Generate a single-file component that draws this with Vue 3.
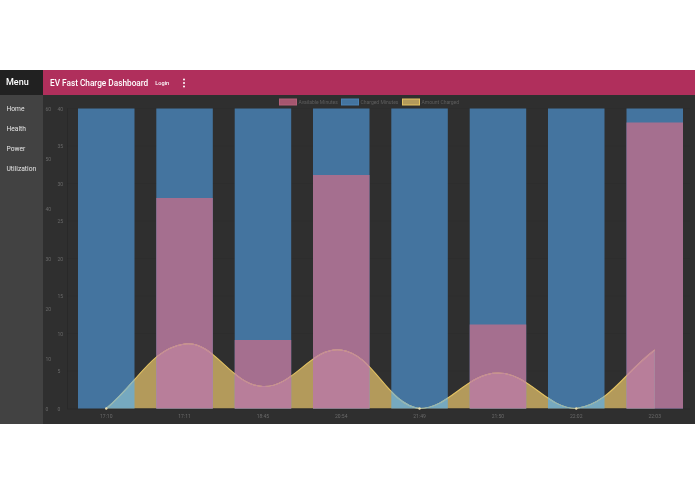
<template>
  <div class="page">
    <div class="dashboard">
      <aside class="sidebar">
        <div class="menu-title">Menu</div>
        <nav class="menu-list">
          <a v-for="item in menuItems" :key="item" class="menu-item">{{ item }}</a>
        </nav>
      </aside>
      <main class="main">
        <header class="toolbar">
          <span class="title">EV Fast Charge Dashboard</span>
          <span class="login">Login</span>
          <svg class="dots" width="4" height="10" viewBox="0 0 4 10">
            <circle cx="2" cy="1.4" r="1" />
            <circle cx="2" cy="5" r="1" />
            <circle cx="2" cy="8.6" r="1" />
          </svg>
        </header>
        <svg class="chart" width="652" height="329" viewBox="43 95 652 329">
          <defs>
            <clipPath id="area-clip"><path :d="areaPath" /></clipPath>
            <clipPath id="pink-clip">
              <rect v-for="bar in bars" :key="bar.label" :x="bar.x" :y="bar.y" :width="barWidth" :height="bottom - bar.y" />
            </clipPath>
            <clipPath id="blue-clip">
              <rect v-for="bar in emptyBars" :key="bar.label" :x="bar.x" :y="top" :width="barWidth" :height="bottom - top" />
            </clipPath>
          </defs>

          <!-- legend -->
          <g v-for="item in legend" :key="item.label">
            <rect :x="item.x" y="99" width="17" height="6" :fill="item.fill" :stroke="item.stroke" stroke-width="1" />
            <text :x="item.x + 19" y="104" class="legend-text">{{ item.label }}</text>
          </g>

          <!-- grid -->
          <line v-for="t in gridY" :key="t" x1="67" x2="690" :y1="t" :y2="t" class="grid" />
          <line x1="67.5" x2="67.5" :y1="top" :y2="bottom" class="axis" />
          <line x1="67" x2="690" :y1="bottom + 0.5" :y2="bottom + 0.5" class="axis" />

          <!-- axes -->
          <text v-for="t in leftTicks" :key="'l' + t.label" x="45.5" :y="t.y + 2" class="tick">{{ t.label }}</text>
          <text v-for="t in rightTicks" :key="'r' + t.label" x="57.5" :y="t.y + 2" class="tick">{{ t.label }}</text>
          <text v-for="bar in bars" :key="'x' + bar.label" :x="bar.cx" y="418" text-anchor="middle" class="tick">{{ bar.label }}</text>

          <!-- bars -->
          <g v-for="bar in bars" :key="'b' + bar.label">
            <rect :x="bar.x" :y="top" :width="barWidth" :height="bottom - top" fill="#44749f" />
            <rect :x="bar.x" :y="bar.y" :width="barWidth" :height="bottom - bar.y" fill="#a56f8f" />
          </g>

          <!-- amount charged area: tinted by whatever is under it -->
          <g clip-path="url(#area-clip)">
            <rect x="67" :y="top" width="628" :height="bottom - top" fill="#b39a5b" />
            <g v-for="bar in bars" :key="'a' + bar.label">
              <rect :x="bar.x" :y="top" :width="barWidth" :height="bottom - top" fill="#76a9bf" />
              <rect :x="bar.x" :y="bar.y" :width="barWidth" :height="bottom - bar.y" fill="#b87e9a" />
            </g>
          </g>

          <path :d="linePath" fill="none" stroke="#e3c262" stroke-width="1.1" />
          <g clip-path="url(#pink-clip)">
            <path :d="linePath" fill="none" stroke="#c285a2" stroke-width="1.1" />
          </g>
          <g clip-path="url(#blue-clip)">
            <path :d="linePath" fill="none" stroke="#86b6c6" stroke-width="1.1" />
          </g>
          <circle cx="106.25" cy="408.5" r="1.2" fill="#eadcae" />
          <circle cx="419.55" cy="408.5" r="1.2" fill="#eadcae" />
          <circle cx="576.25" cy="408.5" r="1.2" fill="#eadcae" />
        </svg>
      </main>
    </div>
  </div>
</template>

<script setup>
import { computed } from 'vue'

const menuItems = ['Home', 'Health', 'Power', 'Utilization']

const top = 108.5
const bottom = 408.5
const barWidth = 56.5

const bars = [
  { label: '17:10', x: 78, y: bottom },
  { label: '17:11', x: 156.3, y: 198 },
  { label: '18:45', x: 234.7, y: 340 },
  { label: '20:54', x: 313, y: 175 },
  { label: '21:49', x: 391.3, y: bottom },
  { label: '21:50', x: 469.7, y: 324.5 },
  { label: '22:02', x: 548, y: bottom },
  { label: '22:03', x: 626.5, y: 122.5 }
].map(b => ({ ...b, cx: b.x + barWidth / 2 }))

const emptyBars = bars.filter(b => b.y === bottom)

const amounts = [408.5, 344, 386.5, 350, 408.5, 373, 408.5, 350]

const legend = [
  { label: 'Available Minutes', x: 279.5, fill: '#a5566f', stroke: '#b5607a' },
  { label: 'Charged Minutes', x: 341.5, fill: '#44749f', stroke: '#4a82b4' },
  { label: 'Amount Charged', x: 402.5, fill: '#b39a5b', stroke: '#e3c262' }
]

const leftTicks = [60, 50, 40, 30, 20, 10, 0].map((v, i) => ({ label: v, y: top + i * 50 }))
const rightTicks = [40, 35, 30, 25, 20, 15, 10, 5, 0].map((v, i) => ({ label: v, y: top + i * 37.5 }))
const gridY = rightTicks.slice(0, -1).map(t => t.y)

// same spline Chart.js uses for tension .4
const points = computed(() => bars.map((b, i) => ({ x: b.cx, y: amounts[i] })))

const linePath = computed(() => {
  const pts = points.value
  let d = `M${pts[0].x} ${pts[0].y}`
  const ctrl = pts.map((p, i) => {
    const prev = pts[i - 1] || p
    const next = pts[i + 1] || p
    const d01 = Math.hypot(p.x - prev.x, p.y - prev.y)
    const d12 = Math.hypot(next.x - p.x, next.y - p.y)
    const sum = d01 + d12 || 1
    const fa = 0.4 * d01 / sum
    const fb = 0.4 * d12 / sum
    return {
      inX: p.x - fa * (next.x - prev.x),
      inY: p.y - fa * (next.y - prev.y),
      outX: p.x + fb * (next.x - prev.x),
      outY: p.y + fb * (next.y - prev.y)
    }
  })
  for (let i = 1; i < pts.length; i++) {
    const a = ctrl[i - 1]
    const b = ctrl[i]
    d += ` C${a.outX} ${Math.min(a.outY, bottom)} ${b.inX} ${Math.min(b.inY, bottom)} ${pts[i].x} ${pts[i].y}`
  }
  return d
})

const areaPath = computed(() => {
  const pts = points.value
  return `${linePath.value} L${pts[pts.length - 1].x} ${bottom} L${pts[0].x} ${bottom} Z`
})
</script>

<style scoped>
.page {
  width: 695px;
  height: 494px;
  background: #fff;
  padding-top: 70px;
  box-sizing: border-box;
  font-family: Roboto, "Liberation Sans", sans-serif;
}

/* the reference is a slightly soft, scaled down capture */
.dashboard {
  display: flex;
  height: 354px;
  background: #2f2f2f;
  filter: blur(0.35px);
}

.sidebar {
  width: 43px;
  flex: none;
  background: #424242;
  color: #e4e4e4;
}

.menu-title {
  height: 25px;
  line-height: 25px;
  padding-left: 6px;
  background: #212121;
  color: #fff;
  font-size: 9px;
  font-weight: 500;
}

.menu-list {
  display: flex;
  flex-direction: column;
  padding-top: 3.5px;
}

.menu-item {
  height: 20px;
  line-height: 20px;
  padding-left: 6.5px;
  font-size: 6.7px;
  white-space: nowrap;
}

.main {
  flex: 1;
  min-width: 0;
  display: flex;
  flex-direction: column;
}

.toolbar {
  height: 25px;
  flex: none;
  display: flex;
  align-items: center;
  padding-left: 7px;
  background: #b02f5c;
  color: #fff;
}

.title {
  font-size: 8.25px;
  font-weight: 500;
}

.login {
  margin-left: 7px;
  font-size: 5.6px;
  font-weight: 500;
}

.dots {
  margin-left: 13px;
  fill: #fff;
}

.chart {
  display: block;
}

.legend-text {
  font-size: 5px;
  fill: #5e5e5e;
}

.tick {
  font-size: 5px;
  fill: #6a6a6a;
}

.grid {
  stroke: rgba(0, 0, 0, 0.04);
  stroke-width: 1;
}

.axis {
  stroke: rgba(0, 0, 0, 0.12);
  stroke-width: 1;
}
</style>
